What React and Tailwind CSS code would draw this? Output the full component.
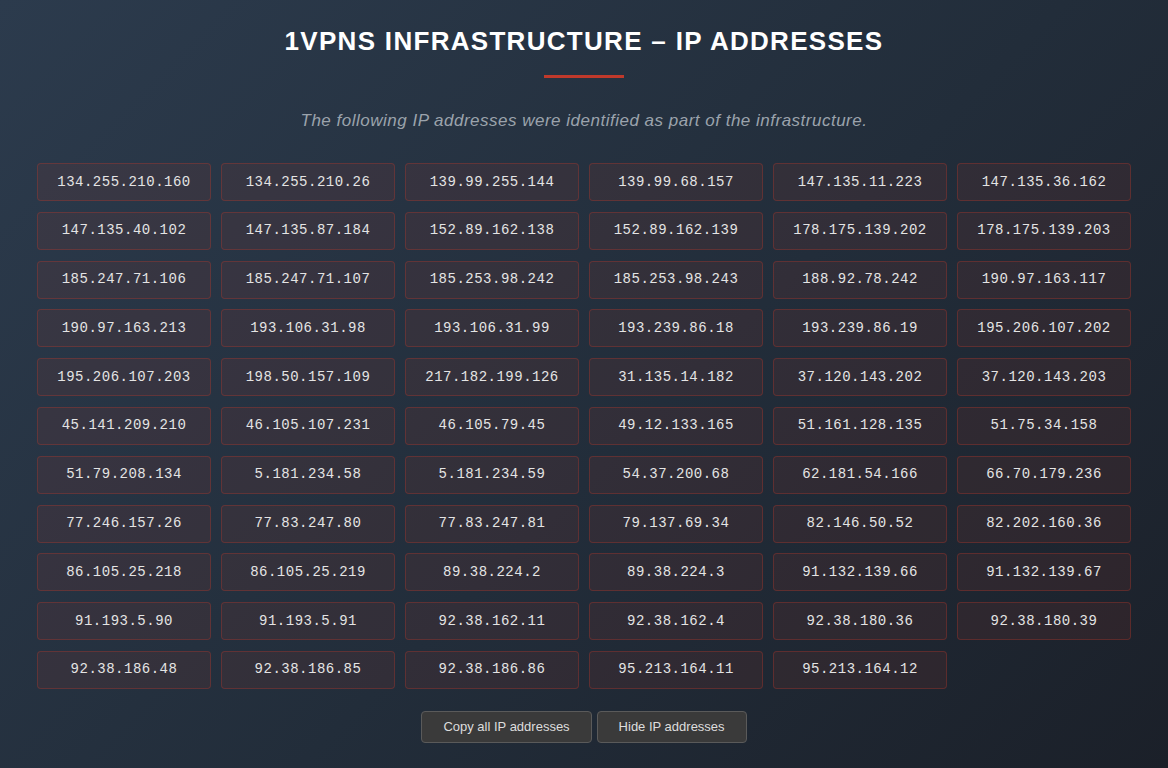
const ips = [
  '134.255.210.160', '134.255.210.26', '139.99.255.144', '139.99.68.157', '147.135.11.223', '147.135.36.162',
  '147.135.40.102', '147.135.87.184', '152.89.162.138', '152.89.162.139', '178.175.139.202', '178.175.139.203',
  '185.247.71.106', '185.247.71.107', '185.253.98.242', '185.253.98.243', '188.92.78.242', '190.97.163.117',
  '190.97.163.213', '193.106.31.98', '193.106.31.99', '193.239.86.18', '193.239.86.19', '195.206.107.202',
  '195.206.107.203', '198.50.157.109', '217.182.199.126', '31.135.14.182', '37.120.143.202', '37.120.143.203',
  '45.141.209.210', '46.105.107.231', '46.105.79.45', '49.12.133.165', '51.161.128.135', '51.75.34.158',
  '51.79.208.134', '5.181.234.58', '5.181.234.59', '54.37.200.68', '62.181.54.166', '66.70.179.236',
  '77.246.157.26', '77.83.247.80', '77.83.247.81', '79.137.69.34', '82.146.50.52', '82.202.160.36',
  '86.105.25.218', '86.105.25.219', '89.38.224.2', '89.38.224.3', '91.132.139.66', '91.132.139.67',
  '91.193.5.90', '91.193.5.91', '92.38.162.11', '92.38.162.4', '92.38.180.36', '92.38.180.39',
  '92.38.186.48', '92.38.186.85', '92.38.186.86', '95.213.164.11', '95.213.164.12',
]

export default function App() {
  return (
    <div className="min-h-[768px] w-full bg-[linear-gradient(135deg,#2c3b4d_0%,#222d3a_55%,#1b2029_100%)] font-['Liberation_Sans',Arial,sans-serif]">
      <div className="mx-auto w-[1094px] pt-[26px] pb-[26px]">
        {/* Header */}
        <h1 className="text-center text-[26px] font-bold uppercase leading-[30px] tracking-[1.3px] text-white">
          1VPNS Infrastructure – IP Addresses
        </h1>
        <div className="mx-auto mt-[19px] h-[3px] w-[80px] bg-[#c0392b]" />
        <p className="mt-[33px] text-center text-[17px] italic leading-[20px] tracking-[0.5px] text-[#9ba3ac]">
          The following IP addresses were identified as part of the infrastructure.
        </p>

        {/* IP grid */}
        <div className="mt-[32px] grid grid-cols-6 gap-x-[10px] gap-y-[10.8px]">
          {ips.map((ip) => (
            <div
              key={ip}
              className="flex h-[38px] items-center justify-center rounded-[4px] border border-[rgba(192,57,43,0.32)] bg-[rgba(192,57,43,0.1)] font-['Liberation_Mono','Courier_New',monospace] text-[14px] tracking-[0.5px] text-[#e4e4e4]"
            >
              {ip}
            </div>
          ))}
        </div>

        {/* Actions */}
        <div className="mt-[22px] flex justify-center gap-[5px]">
          <button className="h-[32px] rounded-[4px] border border-[#5a5a5a] bg-[#3a3a3a] px-[21px] text-[13px] text-[#dddddd]">
            Copy all IP addresses
          </button>
          <button className="h-[32px] rounded-[4px] border border-[#5a5a5a] bg-[#3a3a3a] px-[21px] text-[13px] text-[#dddddd]">
            Hide IP addresses
          </button>
        </div>
      </div>
    </div>
  )
}
